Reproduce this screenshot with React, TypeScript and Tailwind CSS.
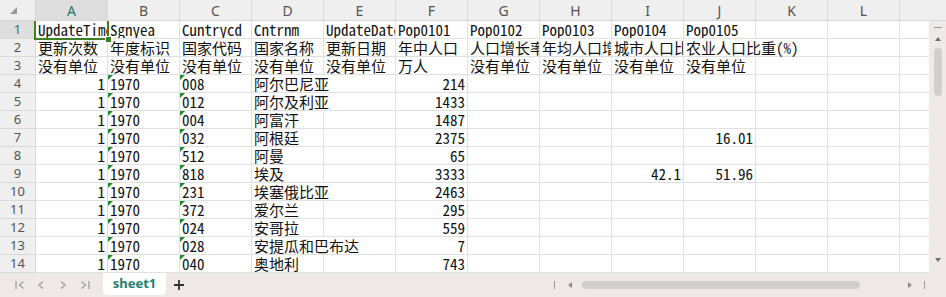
import React from "react";

const COLS = ["A", "B", "C", "D", "E", "F", "G", "H", "I", "J", "K", "L", "M"];

type Cell = { v: string; r?: boolean; t?: boolean };

const E: Cell = { v: "" };
const L = (v: string): Cell => ({ v });
const R = (v: string): Cell => ({ v, r: true });
const T = (v: string): Cell => ({ v, t: true });

const dataRow = (cc: string, name: string, pop: string, i = "", j = ""): Cell[] => [
  R("1"),
  T("1970"),
  T(cc),
  L(name),
  E,
  R(pop),
  E,
  E,
  i ? R(i) : E,
  j ? R(j) : E,
  E,
  E,
  E,
];

const rows: Cell[][] = [
  [
    L("UpdateTime"),
    L("Sgnyea"),
    L("Cuntrycd"),
    L("Cntrnm"),
    L("UpdateDate"),
    L("Pop0101"),
    L("Pop0102"),
    L("Pop0103"),
    L("Pop0104"),
    L("Pop0105"),
    E,
    E,
    E,
  ],
  [
    L("更新次数"),
    L("年度标识"),
    L("国家代码"),
    L("国家名称"),
    L("更新日期"),
    L("年中人口"),
    L("人口增长率(%)"),
    L("年均人口增长率(%)"),
    L("城市人口比重(%)"),
    L("农业人口比重(%)"),
    E,
    E,
    E,
  ],
  [
    L("没有单位"),
    L("没有单位"),
    L("没有单位"),
    L("没有单位"),
    L("没有单位"),
    L("万人"),
    L("没有单位"),
    L("没有单位"),
    L("没有单位"),
    L("没有单位"),
    E,
    E,
    E,
  ],
  dataRow("008", "阿尔巴尼亚", "214"),
  dataRow("012", "阿尔及利亚", "1433"),
  dataRow("004", "阿富汗", "1487"),
  dataRow("032", "阿根廷", "2375", "", "16.01"),
  dataRow("512", "阿曼", "65"),
  dataRow("818", "埃及", "3333", "42.1", "51.96"),
  dataRow("231", "埃塞俄比亚", "2463"),
  dataRow("372", "爱尔兰", "295"),
  dataRow("024", "安哥拉", "559"),
  dataRow("028", "安提瓜和巴布达", "7"),
  dataRow("040", "奥地利", "743"),
];

const estWidth = (s: string) => {
  let w = 0;
  for (const ch of s) w += /[\x00-\x7f]/.test(ch) ? 7.5 : 15;
  return w;
};

function GridCell({ cell, next }: { cell: Cell; next?: Cell }) {
  const nextEmpty = !next || next.v === "";
  const overflows = !cell.r && cell.v !== "" && estWidth(cell.v) + 2 > 70 && nextEmpty;
  return (
    <div
      className={`relative h-[18px] shrink-0 w-[72px] border-b border-[#e1e1e1] ${
        overflows ? "border-r border-r-transparent overflow-visible z-10" : "border-r border-r-[#e1e1e1] overflow-hidden"
      } flex items-end ${cell.r ? "justify-end pr-[2px]" : "justify-start pl-[2px]"}`}
    >
      {cell.t && (
        <span className="absolute left-0 top-0 w-0 h-0 border-t-[5px] border-t-[#1f8a2e] border-r-[5px] border-r-transparent" />
      )}
      <span className="whitespace-nowrap text-[#111] font-['Noto_Sans_Mono_CJK_SC','Noto_Sans_CJK_SC','Liberation_Mono',monospace] text-[15px] leading-[17px]">
        {cell.v}
      </span>
    </div>
  );
}

export default function App() {
  return (
    <div className="w-[946px] h-[297px] overflow-hidden bg-white flex flex-col select-none">
      {/* column header */}
      <div className="flex h-[21px] shrink-0 bg-[#efefef] border-b border-[#d6d6d6]">
        <div className="flex flex-1 overflow-hidden">
          <div className="w-[36px] shrink-0 border-r border-[#d6d6d6] relative">
            <span className="absolute left-[10px] top-[7px] w-0 h-0 border-b-[7px] border-b-[#9a9a9a] border-l-[7px] border-l-transparent" />
          </div>
          {COLS.map((c, i) => (
            <div
              key={c}
              className={`w-[72px] shrink-0 border-r border-[#d9d9d9] flex items-center justify-center font-['Noto_Sans',sans-serif] text-[14px] ${
                i === 0 ? "bg-[#dedede] text-[#1d7a6a]" : "text-[#555]"
              }`}
            >
              {c}
            </div>
          ))}
        </div>
        <div className="w-[17px] shrink-0" />
      </div>

      {/* body */}
      <div className="flex h-[252px] shrink-0">
        <div className="flex-1 overflow-hidden relative">
          {rows.map((row, ri) => (
            <div key={ri} className="flex">
              <div
                className={`w-[36px] h-[18px] shrink-0 border-r border-b border-[#d9d9d9] flex items-center justify-center font-['Noto_Sans',sans-serif] text-[13px] ${
                  ri === 0 ? "bg-[#dedede] text-[#3c6e66]" : "bg-[#efefef] text-[#555]"
                }`}
              >
                {ri + 1}
              </div>
              {row.map((cell, ci) => (
                <GridCell key={ci} cell={cell} next={row[ci + 1]} />
              ))}
            </div>
          ))}
          {/* selection */}
          <div className="absolute left-[34px] top-[-2px] w-[75px] h-[21px] border-2 border-[#3c7f25] pointer-events-none z-20" />
          <div className="absolute left-[105px] top-[15px] w-[5px] h-[5px] bg-[#3c7f25] border border-white box-content pointer-events-none z-20" />
        </div>
        {/* vertical scrollbar */}
        <div className="w-[17px] shrink-0 bg-[#efeae8] flex flex-col items-center">
          <div className="mt-[6px] w-[8px] h-[1px] bg-[#9a9a9a]" />
          <div className="mt-[9px] w-0 h-0 border-l-[3.5px] border-l-transparent border-r-[3.5px] border-r-transparent border-b-[4px] border-b-[#6f6f6f]" />
          <div className="mt-[7px] w-[8px] h-[48px] rounded-full bg-[#d3cfcd]" />
          <div className="flex-1" />
          <div className="mb-[11px] w-0 h-0 border-l-[3.5px] border-l-transparent border-r-[3.5px] border-r-transparent border-t-[4px] border-t-[#6f6f6f]" />
        </div>
      </div>

      {/* bottom bar */}
      <div className="flex h-[24px] shrink-0 bg-[#eee9e7] items-start">
        <div className="flex items-center h-[24px] pl-[14px]">
          <svg width="12" height="12" viewBox="0 0 12 12" className="mr-[9px]">
            <path d="M2 2v8M9.5 2.5L5.5 6l4 3.5" stroke="#a3a3a3" strokeWidth="1.4" fill="none" />
          </svg>
          <svg width="12" height="12" viewBox="0 0 12 12" className="mr-[10px]">
            <path d="M8 2.5L4 6l4 3.5" stroke="#a3a3a3" strokeWidth="1.4" fill="none" />
          </svg>
          <svg width="12" height="12" viewBox="0 0 12 12" className="mr-[10px]">
            <path d="M4 2.5L8 6l-4 3.5" stroke="#a3a3a3" strokeWidth="1.4" fill="none" />
          </svg>
          <svg width="12" height="12" viewBox="0 0 12 12">
            <path d="M2.5 2.5L6.5 6l-4 3.5M10 2v8" stroke="#a3a3a3" strokeWidth="1.4" fill="none" />
          </svg>
        </div>
        <div className="ml-[12px] w-[63px] h-[22px] bg-white rounded-b-[4px] flex items-center justify-center font-['Noto_Sans',sans-serif] font-bold text-[13px] text-[#1e8073]">
          sheet1
        </div>
        <div className="ml-[7px] h-[24px] flex items-center">
          <svg width="12" height="12" viewBox="0 0 12 12">
            <path d="M6 1v10M1 6h10" stroke="#333" strokeWidth="1.8" />
          </svg>
        </div>
        <div className="ml-[369px] h-[24px] flex items-center">
          <div className="w-[1px] h-[8px] bg-[#9a9a9a]" />
          <div className="ml-[13px] w-0 h-0 border-t-[3px] border-t-transparent border-b-[3px] border-b-transparent border-r-[4px] border-r-[#8a8a8a]" />
          <div className="ml-[10px] w-[278px] h-[8px] rounded-full bg-[#d3cfcd]" />
          <div className="ml-[48px] w-0 h-0 border-t-[3px] border-t-transparent border-b-[3px] border-b-transparent border-l-[4px] border-l-[#8a8a8a]" />
          <div className="ml-[12px] w-[1px] h-[8px] bg-[#9a9a9a]" />
        </div>
      </div>
    </div>
  );
}
